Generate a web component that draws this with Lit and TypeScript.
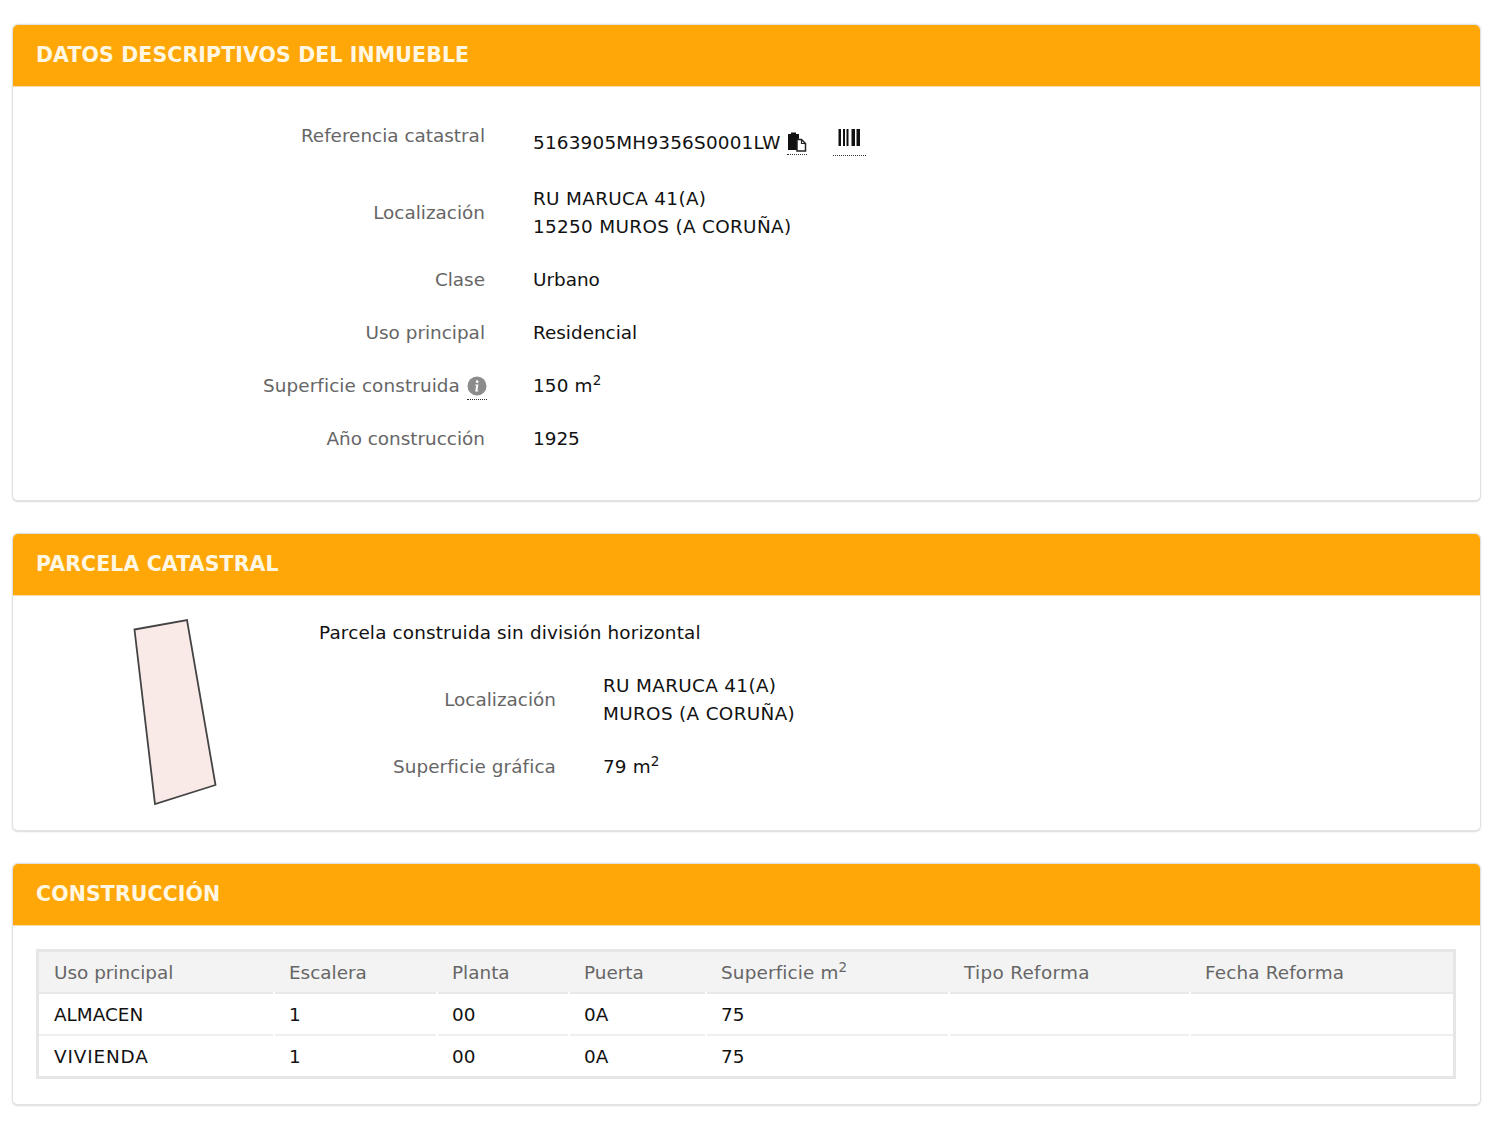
import { css, html, LitElement } from 'lit';
import { customElement } from 'lit/decorators.js';

const copyIcon = html`<svg width="20" height="20" viewBox="0 0 20 20">
  <path d="M1 2h3v-1.500h5v1.500h3v5h-2v11h-9z" fill="#111" />
  <path d="M10 7.500h4.500l4 4v7.500h-8.500z" fill="#fff" stroke="#222" stroke-width="1.500" />
  <path d="M14.500 7.500v4h4" fill="none" stroke="#222" stroke-width="1.200" />
</svg>`;

const barcodeIcon = html`<svg width="23" height="18" viewBox="0 0 23 18">
  <path d="M0.500 0h2.500v17h-2.500zM5 0h2v17h-2zM8.500 0h2v17h-2zM13.500 0h3.500v17h-3.500zM18.500 0h3.500v17h-3.500z" fill="#111" />
</svg>`;

const infoIcon = html`<svg width="20" height="20" viewBox="0 0 20 20">
  <circle cx="10" cy="10" r="9.500" fill="#8c8c8c" />
  <path d="M10.200 4.200a1.400 1.400 0 1 1-.1 2.800 1.400 1.400 0 0 1 .1-2.800zM8.400 8.600h3l-1 6h1l-.2 1h-3l1-6h-1z" fill="#fff" />
</svg>`;

@customElement('app-root')
export class AppRoot extends LitElement {
  static override styles = css`
    :host {
      display: block;
      padding: 24px 19px 21px 12px;
      font-family: 'DejaVu Sans', Verdana, sans-serif;
      font-size: 18.4px;
      color: #111;
    }
    .panel {
      border: 1px solid #e2e2e2;
      border-bottom-width: 2px;
      border-radius: 6px;
      margin-bottom: 31px;
      background: #fff;
      box-shadow: 0 0 2px rgba(0, 0, 0, 0.12);
    }
    .panel:last-child {
      margin-bottom: 0;
    }
    .head {
      height: 61px;
      line-height: 61px;
      padding-left: 23px;
      background: #ffa706;
      color: #fff7e2;
      font-size: 20.5px;
      font-weight: 700;
      letter-spacing: 0.1px;
      border-radius: 5px 5px 0 0;
      border-bottom: 1px solid #f5dcae;
    }
    .rows {
      display: grid;
      grid-template-columns: 472px 1fr;
      column-gap: 48px;
      padding: 28px 0 35px;
      line-height: 28px;
    }
    .label {
      color: #666;
      text-align: right;
      display: flex;
      justify-content: flex-end;
      align-items: center;
      padding: 12.5px 0;
    }
    .value {
      display: flex;
      flex-direction: column;
      justify-content: center;
      padding: 12.5px 0;
    }
    .label.top {
      padding: 7px 0 22px;
    }
    .value.top {
      flex-direction: row;
      justify-content: flex-start;
      align-items: center;
      padding: 14px 0 15px;
      letter-spacing: 0.2px;
    }
    .slim {
      letter-spacing: 0.1px;
    }
    .tight {
      letter-spacing: 0.15px;
    }
    .caps {
      letter-spacing: 0.33px;
    }
    .upper {
      letter-spacing: 0.85px;
    }
    sup {
      font-size: 13.5px;
      line-height: 0;
    }
    .dotted {
      display: inline-flex;
      border-bottom: 1.5px dotted #333;
      line-height: 0;
    }
    .copy {
      margin-left: 6px;
      padding-bottom: 2px;
    }
    .barcode {
      margin-left: 26px;
      padding: 0 5px 8px;
      position: relative;
      top: -1px;
    }
    .info {
      margin: 0 -2px 0 7px;
      padding-bottom: 3px;
      position: relative;
      top: 2px;
    }
    .parcela {
      display: grid;
      grid-template-columns: 306px 1fr;
      height: 234px;
    }
    .plot {
      display: block;
      margin: 22px 0 0 117px;
    }
    .plot-info {
      padding-top: 23px;
      line-height: 28px;
    }
    .plot-title {
      margin-bottom: 12px;
    }
    .plot-rows {
      display: grid;
      grid-template-columns: 237px 1fr;
      column-gap: 47px;
    }
    .table-wrap {
      padding: 23px 24px 25px 23px;
    }
    table {
      width: 100%;
      border: 3px solid #e6e6e6;
      border-collapse: separate;
      border-spacing: 0;
      table-layout: fixed;
    }
    th,
    td {
      height: 40px;
      padding: 0 0 0 15px;
      text-align: left;
      font-weight: 400;
      border-bottom: 2px solid #efefef;
      position: relative;
    }
    /* the rule under each row breaks where two columns meet */
    th + th::before,
    td + td::before {
      content: '';
      position: absolute;
      left: -1px;
      bottom: -2px;
      width: 2px;
      height: 2px;
      background: #fff;
    }
    tr:last-child td {
      border-bottom: 0;
    }
    tr:last-child td::before {
      display: none;
    }
    th {
      background: #f3f3f3;
      color: #666;
      border-bottom-color: #e8e8e8;
    }
    .c1 { width: 220px; }
    .c2 { width: 148px; }
    .c3 { width: 117px; }
    .c4 { width: 122px; }
    .c5 { width: 228px; }
    .c6 { width: 226px; }
  `;

  override render() {
    return html`
      <section class="panel">
        <div class="head">DATOS DESCRIPTIVOS DEL INMUEBLE</div>
        <div class="rows">
          <div class="label top">Referencia catastral</div>
          <div class="value top">
            5163905MH9356S0001LW
            <span class="dotted copy">${copyIcon}</span>
            <span class="dotted barcode">${barcodeIcon}</span>
          </div>
          <div class="label">Localización</div>
          <div class="value caps"><div>RU MARUCA 41(A)</div><div>15250 MUROS (A CORUÑA)</div></div>
          <div class="label">Clase</div>
          <div class="value">Urbano</div>
          <div class="label">Uso principal</div>
          <div class="value">Residencial</div>
          <div class="label"><span class="slim">Superficie construida</span><span class="dotted info">${infoIcon}</span></div>
          <div class="value"><div class="tight">150 m<sup>2</sup></div></div>
          <div class="label">Año construcción</div>
          <div class="value">1925</div>
        </div>
      </section>

      <section class="panel">
        <div class="head">PARCELA CATASTRAL</div>
        <div class="parcela">
          <svg class="plot" width="90" height="192" viewBox="0 0 90 192">
            <path d="M4.500 11.500L57 2 85.500 167 25 186z" fill="#f9eae8" stroke="#444" stroke-width="1.800" />
          </svg>
          <div class="plot-info">
            <div class="plot-title tight">Parcela construida sin división horizontal</div>
            <div class="plot-rows">
              <div class="label">Localización</div>
              <div class="value caps"><div>RU MARUCA 41(A)</div><div>MUROS (A CORUÑA)</div></div>
              <div class="label slim">Superficie gráfica</div>
              <div class="value"><div class="tight">79 m<sup>2</sup></div></div>
            </div>
          </div>
        </div>
      </section>

      <section class="panel">
        <div class="head">CONSTRUCCIÓN</div>
        <div class="table-wrap">
          <table>
            <thead>
              <tr>
                <th class="c1">Uso principal</th>
                <th class="c2">Escalera</th>
                <th class="c3">Planta</th>
                <th class="c4">Puerta</th>
                <th class="c5 tight">Superficie m<sup>2</sup></th>
                <th class="c6 caps">Tipo Reforma</th>
                <th class="tight">Fecha Reforma</th>
              </tr>
            </thead>
            <tbody>
              <tr><td>ALMACEN</td><td>1</td><td>00</td><td>0A</td><td>75</td><td></td><td></td></tr>
              <tr><td class="upper">VIVIENDA</td><td>1</td><td>00</td><td>0A</td><td>75</td><td></td><td></td></tr>
            </tbody>
          </table>
        </div>
      </section>
    `;
  }
}
